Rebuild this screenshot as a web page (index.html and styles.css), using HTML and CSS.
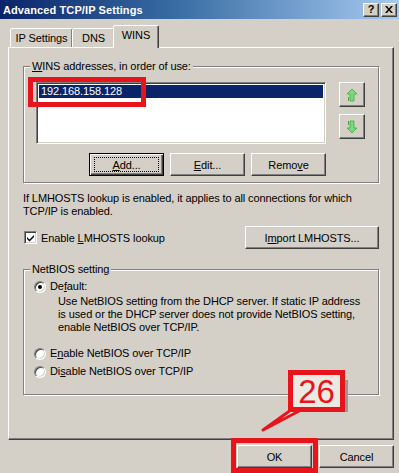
FILE: index.html
```html
<!DOCTYPE html>
<html>
<head>
<meta charset="utf-8">
<link rel="stylesheet" href="styles.css">
</head>
<body>
<div class="window">
  <div class="titlebar">
    <span class="title">Advanced TCP/IP Settings</span>
    <div class="tb-buttons">
      <span class="tb-btn">?</span>
      <span class="tb-btn tb-close">
        <svg width="8" height="7" viewBox="0 0 8 7"><path d="M0 0h2l2 2.5L6 0h2L5 3.5 8 7H6L4 4.5 2 7H0l3-3.5z" fill="#000"/></svg>
      </span>
    </div>
  </div>
  <div class="content">
    <div class="tabs">
      <div class="tab t-ip">IP Settings</div>
      <div class="tab t-dns">DNS</div>
      <div class="tab active t-wins">WINS</div>
    </div>
    <div class="panel">
      <div class="group wins">
        <div class="legend"><u>W</u>INS addresses, in order of use:</div>
        <div class="list-row">
          <div class="listbox">
            <div class="item selected">192.168.158.128</div>
          </div>
          <div class="updown">
            <div class="btn sq">
              <svg width="12" height="14" viewBox="0 0 12 14"><path d="M6 1 L11 6 H8 V13 H4 V6 H1 Z" fill="#7ada7a" stroke="#45a845" stroke-width="0.8"/><path d="M2.5 9 V13" stroke="#45a845" stroke-width="1"/></svg>
            </div>
            <div class="btn sq">
              <svg width="12" height="14" viewBox="0 0 12 14"><path d="M6 13 L11 8 H8 V1 H4 V8 H1 Z" fill="#7ada7a" stroke="#45a845" stroke-width="0.8"/><path d="M2.5 1 V5" stroke="#45a845" stroke-width="1"/></svg>
            </div>
          </div>
        </div>
        <div class="btn-row">
          <div class="btn push default"><span class="focus"><u>A</u>dd...</span></div>
          <div class="btn push"><span><u>E</u>dit...</span></div>
          <div class="btn push"><span>Remo<u>v</u>e</span></div>
        </div>
      </div>
      <p class="para">If LMHOSTS lookup is enabled, it applies to all connections for which<br>TCP/IP is enabled.</p>
      <div class="check-row">
        <label class="check"><span class="checkbox"><svg width="9" height="9" viewBox="0 0 9 9"><path d="M1 4 L3.5 6.5 L8 2 V4 L3.5 8.5 L1 6 Z" fill="#000"/></svg></span><span>Enable <u>L</u>MHOSTS lookup</span></label>
        <div class="btn push wide"><span>I<u>m</u>port LMHOSTS...</span></div>
      </div>
      <div class="group netbios">
        <div class="legend">NetBIOS setting</div>
        <div class="radio-row first"><span class="radio on"></span><span>De<u>f</u>ault:</span></div>
        <div class="desc">Use NetBIOS setting from the DHCP server. If static IP address<br>is used or the DHCP server does not provide NetBIOS setting,<br>enable NetBIOS over TCP/IP.</div>
        <div class="radio-row gap1"><span class="radio"></span><span>E<u>n</u>able NetBIOS over TCP/IP</span></div>
        <div class="radio-row gap2"><span class="radio"></span><span>Di<u>s</u>able NetBIOS over TCP/IP</span></div>
      </div>
    </div>
    <div class="footer">
      <div class="btn push">OK</div>
      <div class="btn push">Cancel</div>
    </div>
  </div>

  <div class="mark mark-ip"></div>
  <div class="mark mark-ok"></div>
  <svg class="callout" width="95" height="66" viewBox="0 0 95 66">
    <rect x="85" y="12" width="5" height="32" fill="#9a9890"/>
    <path d="M5 62 L33 42 L43 42 Z" fill="#ece9e3" stroke="#e8141c" stroke-width="3" stroke-linejoin="round"/>
    <rect x="32.5" y="4.5" width="52" height="37" fill="#ece9e3" stroke="#e8141c" stroke-width="5"/>
    <text x="58.5" y="35" text-anchor="middle" class="callout-text">26</text>
  </svg>
</div>
</body>
</html>
```

FILE: styles.css
```css
* { box-sizing: border-box; }
html, body { margin: 0; padding: 0; }
body {
  width: 399px;
  height: 473px;
  overflow: hidden;
  background: #d4d0c8;
  font-family: "Liberation Sans", Arial, sans-serif;
  font-size: 11px;
  letter-spacing: -0.1px;
  color: #000;
}
u { text-decoration: underline; text-underline-offset: 1px; }
.window { position: relative; width: 399px; height: 473px; }

.titlebar {
  height: 19px;
  background: linear-gradient(to right, #0a246a 0%, #3a6ea5 45%, #a6caf0 100%);
  display: flex;
  align-items: center;
  justify-content: space-between;
  padding: 0 2px 0 3px;
}
.title { color: #fff; font-weight: bold; font-size: 11px; letter-spacing: 0.1px; }
.tb-buttons { display: flex; gap: 2px; }
.tb-btn {
  width: 16px; height: 14px;
  background: #d4d0c8;
  border: 1px solid; border-color: #fff #404040 #404040 #fff;
  box-shadow: inset -1px -1px #808080;
  display: flex; align-items: center; justify-content: center;
  font-weight: bold; font-size: 11px; line-height: 1;
}

.content { padding: 6px 0 0 8px; }

.tabs { display: flex; align-items: flex-end; height: 22px; padding-left: 2px; position: relative; z-index: 2; }
.tab {
  height: 19px;
  border: 1px solid; border-bottom: none;
  border-color: #fff #404040 transparent #fff;
  border-radius: 2px 2px 0 0;
  box-shadow: inset -1px 0 #808080;
  display: flex; align-items: center; justify-content: center;
  background: #d4d0c8;
}
.t-ip { width: 63px; }
.t-dns { width: 43px; margin-left: -1px; }
.t-wins { width: 46px; }
.tab.active {
  height: 23px;
  margin: 0 0 -1px -2px;
  padding-bottom: 4px;
  z-index: 3;
}

.panel {
  width: 386px;
  height: 393px;
  border: 1px solid; border-color: #fff #404040 #404040 #fff;
  box-shadow: inset -1px -1px #808080;
  padding: 18px 14px 0 14px;
  position: relative; z-index: 1;
}

.group {
  width: 356px;
  border: 1px solid #808080;
  box-shadow: inset 1px 1px #fff, 1px 1px #fff;
}
.legend {
  display: table;
  padding: 0 2px;
  line-height: 13px;
  background: #d4d0c8;
}
.wins { padding: 0 12px 6px 12px; }
.wins .legend { margin: -7px 0 0 -6px; }
.list-row { display: flex; margin-top: 9px; }
.listbox {
  width: 290px; height: 62px;
  background: #fff;
  border: 1px solid; border-color: #808080 #fff #fff #808080;
  box-shadow: inset 1px 1px #404040, inset -1px -1px #d4d0c8;
  padding: 2px;
}
.item { height: 13px; line-height: 13px; padding-left: 2px; }
.item.selected { background: #0a246a; color: #fff; }
.updown { display: flex; flex-direction: column; gap: 7px; margin-left: 13px; }

.btn {
  background: #d4d0c8;
  border: 1px solid; border-color: #fff #404040 #404040 #fff;
  box-shadow: inset -1px -1px #808080;
  display: flex; align-items: center; justify-content: center;
}
.btn.sq { width: 26px; height: 25px; }
.btn.push { width: 75px; height: 23px; }
.btn.default {
  border: 1px solid #000;
  box-shadow: inset 1px 1px #fff, inset -1px -1px #404040, inset -2px -2px #808080;
}
.focus {
  border: 1px dotted #000;
  width: 65px; height: 15px;
  display: flex; align-items: center; justify-content: center;
}
.btn-row { display: flex; justify-content: flex-end; gap: 6px; width: 290px; margin-top: 9px; }

.para { margin: 9px 0 0 0; line-height: 13px; }

.check-row { display: flex; align-items: center; justify-content: space-between; width: 356px; margin-top: 8px; }
.check { display: flex; align-items: center; padding-left: 1px; }
.checkbox {
  width: 13px; height: 13px;
  background: #fff;
  border: 1px solid; border-color: #808080 #fff #fff #808080;
  box-shadow: inset 1px 1px #404040, inset -1px -1px #d4d0c8;
  display: flex; align-items: center; justify-content: center;
  margin-right: 4px;
}
.btn.wide { width: 134px; }

.netbios { margin-top: 20px; padding: 0 10px 16px 10px; }
.netbios .legend { margin: -7px 0 0 -4px; }
.radio-row { display: flex; align-items: center; line-height: 13px; }
.radio-row.first { margin-top: 4px; }
.radio-row.gap1 { margin-top: 13px; }
.radio-row.gap2 { margin-top: 5px; }
.radio {
  width: 12px; height: 12px; border-radius: 50%;
  background: #fff;
  border: 1px solid; border-color: #808080 #fff #fff #808080;
  box-shadow: inset 1px 1px #404040, inset -1px -1px #d4d0c8;
  margin-right: 4px;
  position: relative;
}
.radio.on::after {
  content: ""; position: absolute; left: 3px; top: 3px;
  width: 4px; height: 4px; border-radius: 50%; background: #000;
}
.desc { margin: 2px 0 0 24px; line-height: 13px; }

.footer { display: flex; justify-content: flex-end; gap: 7px; padding-right: 5px; margin-top: 5px; }

.mark { position: absolute; border: 5px solid #e8141c; z-index: 10; }
.mark-ip { left: 28px; top: 77px; width: 118px; height: 30px; }
.mark-ok { left: 231px; top: 438px; width: 87px; height: 35px; }
.callout { position: absolute; left: 258px; top: 368px; z-index: 10; }
.callout-text { font-family: "Liberation Sans", Arial, sans-serif; font-size: 33px; fill: #e8141c; }
```
